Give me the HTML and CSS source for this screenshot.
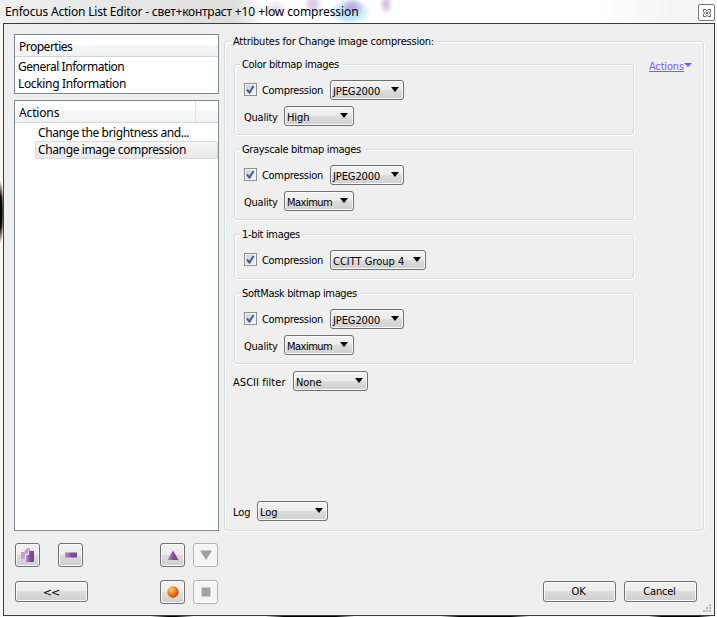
FILE: index.html
```html
<!DOCTYPE html>
<html lang="en">
<head>
<meta charset="utf-8">
<title>Enfocus Action List Editor</title>
<link rel="stylesheet" href="styles.css">
</head>
<body>
<div class="window">
  <header class="titlebar">
    <span class="title"><span class="t-a">Enfocus Action List Editor - </span><span class="t-b">свет+контраст</span><span class="t-c"> +10 +low compression</span></span>
    <button class="close" aria-label="Close"><svg width="8" height="8" viewBox="0 0 8 8"><path d="M.5.5h2l1.500 1 1.500-1h2v2l-1 1.500 1 1.500v2h-2l-1.500-1-1.500 1h-2v-2l1-1.500-1-1.500z" fill="#fff" stroke="#555860"/><path d="M2.500 2.500l3 3m0-3l-3 3" stroke="#777a80"/></svg></button>
  </header>
  <main class="client">
    <aside class="side">
      <section class="tree props">
        <h2 class="tree-head">Properties</h2>
        <div class="row r-gen">General Information</div>
        <div class="row r-lock">Locking Information</div>
      </section>
      <section class="tree actions">
        <h2 class="tree-head split">Actions</h2>
        <div class="row sub r-bright">Change the brightness and...</div>
        <div class="row sub selected r-change">Change image compression</div>
      </section>
      <div class="tools">
        <button class="tool" aria-label="Add"><svg width="15" height="16" viewBox="0 0 15 16"><defs><linearGradient id="p" x2="1"><stop stop-color="#b795c6"/><stop offset=".6" stop-color="#7b4794"/></linearGradient></defs><path d="M1 5h3l3-4h3v3L6 7v5H1z" fill="#c0a2cc"/><path d="M6 8l3-4h5v11H6z" fill="url(#p)"/><path d="M5.500 12V7.500h3V4" stroke="#f2eaf5" fill="none"/></svg></button>
        <button class="tool second" aria-label="Remove"><svg width="12" height="6"><rect width="12" height="5" y=".5" fill="url(#p)"/></svg></button>
        <button class="tool up" aria-label="Move up"><svg width="12" height="10"><path d="M6 .5L11.500 10H.5z" fill="url(#p)"/></svg></button>
        <button class="tool off" aria-label="Move down" disabled><svg width="12" height="10"><path d="M0 .5h12L6 10z" fill="#a0a0a0"/></svg></button>
      </div>
      <div class="tools lower">
        <button class="push"><span class="chev">&lt;&lt;</span></button>
        <button class="tool rec" aria-label="Record"><svg width="12" height="12"><defs><radialGradient id="o" cx=".35" cy=".3" r=".75"><stop stop-color="#ffd26a"/><stop offset=".45" stop-color="#f58a1f"/><stop offset="1" stop-color="#c43c16"/></radialGradient></defs><circle cx="6" cy="6" r="5.700" fill="url(#o)"/></svg></button>
        <button class="tool off" aria-label="Stop" disabled><svg width="10" height="10"><rect width="9" height="9" x=".5" y=".5" fill="#a3a3a3"/></svg></button>
      </div>
    </aside>
    <div class="content">
      <section class="group outer">
        <h2 class="legend l-main">Attributes for Change image compression:</h2>
        <div class="columns">
          <div class="groups">
            <section class="group"><h3 class="legend">Color bitmap images</h3>
              <div class="line"><i class="check"><svg width="9" height="9"><path d="M1 4.500L3.500 7.500 7.500 1" fill="none" stroke="#42589b" stroke-width="2"/></svg></i><span class="w-comp">Compression</span><button class="combo jp"><span>JPEG2000</span></button></div>
              <div class="line"><span class="w-qual">Quality</span><button class="combo q"><span>High</span></button></div>
            </section>
            <section class="group"><h3 class="legend">Grayscale bitmap images</h3>
              <div class="line"><i class="check"><svg width="9" height="9"><path d="M1 4.500L3.500 7.500 7.500 1" fill="none" stroke="#42589b" stroke-width="2"/></svg></i><span class="w-comp">Compression</span><button class="combo jp"><span>JPEG2000</span></button></div>
              <div class="line"><span class="w-qual">Quality</span><button class="combo q max"><span>Maximum</span></button></div>
            </section>
            <section class="group one"><h3 class="legend">1-bit images</h3>
              <div class="line"><i class="check"><svg width="9" height="9"><path d="M1 4.500L3.500 7.500 7.500 1" fill="none" stroke="#42589b" stroke-width="2"/></svg></i><span class="w-comp">Compression</span><button class="combo ccitt"><span>CCITT Group 4</span></button></div>
            </section>
            <section class="group"><h3 class="legend">SoftMask bitmap images</h3>
              <div class="line"><i class="check"><svg width="9" height="9"><path d="M1 4.500L3.500 7.500 7.500 1" fill="none" stroke="#42589b" stroke-width="2"/></svg></i><span class="w-comp">Compression</span><button class="combo jp"><span>JPEG2000</span></button></div>
              <div class="line"><span class="w-qual">Quality</span><button class="combo q max"><span>Maximum</span></button></div>
            </section>
          </div>
          <a class="menu-link"><span>Actions</span></a>
        </div>
        <div class="line ascii"><span class="w-ascii">ASCII filter</span><button class="combo none"><span>None</span></button></div>
        <div class="line log"><span class="w-log">Log</span><button class="combo lg"><span>Log</span></button></div>
      </section>
      <footer class="footer"><button class="push ok">OK</button><button class="push cancel">Cancel</button></footer>
    </div>
    <svg class="grip" width="9" height="9" fill="#b8b8b8"><path d="M6 0h2v2H6zM3 3h2v2H3zM6 3h2v2H6zM0 6h2v2H0zM3 6h2v2H3zM6 6h2v2H6z"/></svg>
  </main>
</div>
</body>
</html>
```
FILE: styles.css
```css
* { box-sizing: border-box; }
body {
  margin: 0;
  width: 717px;
  height: 617px;
  overflow: hidden;
  font: 11px/14px "DejaVu Sans Condensed", "DejaVu Sans", sans-serif;
  font-stretch: condensed;
  color: #000;
  background: #fff;
}
button { font: inherit; color: inherit; padding: 0; margin: 0; }
h2, h3 { margin: 0; font: inherit; }
.window {
  height: 617px;
  padding: 0 3px 1px;
  background:
    radial-gradient(ellipse 4px 32px at 0 212px, #000 50%, transparent) no-repeat,
    radial-gradient(ellipse 45px 3px at 310px 616px, #000 60%, transparent),
    radial-gradient(ellipse 45px 3px at 485px 616px, #000 60%, transparent),
    radial-gradient(ellipse 32px 3px at 680px 616px, #000 60%, transparent),
    radial-gradient(ellipse 22px 2px at 172px 616px, #000 30%, transparent),
    #f8f8f8;
}
.titlebar {
  height: 23px;
  margin: 0 -3px;
  padding: 4px 2px 0 5px;
  display: flex;
  justify-content: space-between;
  background:
    radial-gradient(ellipse 7px 11px at 386px 4px, #d5c3e3 20%, transparent),
    radial-gradient(ellipse 9px 11px at 313px 4px, #dccbe8 30%, transparent),
    radial-gradient(ellipse 12px 9px at 352px 7px, #b9b0e2 20%, transparent),
    radial-gradient(ellipse 21px 13px at 350px 12px, #bce6fa 50%, transparent),
    radial-gradient(ellipse 14px 9px at 275px 9px, #e7d9ed, transparent),
    linear-gradient(90deg, #efefef 0, #e4e4e4 160px, #dedede 235px, #fff 265px, #fff 600px, #f3f3f3 680px, #fafafa);
}
.title {
  font: 12px/16px "Noto Sans", sans-serif;
  white-space: pre;
}
.t-a { letter-spacing: -0.2px; }
.t-b { letter-spacing: -0.25px; }
.t-c { letter-spacing: -0.1px; }
.close {
  width: 17px;
  height: 17px;
  display: grid;
  place-items: center;
  background: #fff;
  border: 1px solid #74777b;
  border-radius: 2px;
}
.client {
  position: relative;
  height: 593px;
  width: 712px;
  border: 1px solid #3c3c3c;
  background: #efefef;
  display: flex;
  padding: 10px 9px 0 10px;
}
.side { width: 205px; font: 12px/17px "Noto Sans", sans-serif; white-space: nowrap; }
.tree { border: 1px solid #828790; background: #fff; }
.props { height: 60px; }
.actions { height: 431px; margin-top: 6px; }
.tree-head {
  height: 22px;
  padding: 3px 4px 0;
  background: linear-gradient(#fff 45%, #f5f6f8 46%, #f1f2f4);
  border-bottom: 1px solid #d5d5d5;
  letter-spacing: -0.5px;
}
.tree-head.split {
  letter-spacing: -0.15px;
  background: linear-gradient(90deg, transparent 180px, #dfe1e4 180px 181px, transparent 181px), linear-gradient(#fff 45%, #f5f6f8 46%, #f1f2f4);
}
.row { height: 17px; line-height: 16px; padding-left: 3px; }
.row:nth-child(2) { margin-top: 2px; }
.r-gen { letter-spacing: -0.47px; }
.r-lock { letter-spacing: -0.35px; }
.r-bright { letter-spacing: -0.41px; }
.r-change { letter-spacing: -0.38px; }
.sub { margin-left: 20px; padding-left: 3px; }
.selected {
  margin-top: -1px;
  height: 18px;
  line-height: 18px;
  border-radius: 3px;
  background: linear-gradient(#f8f8f8, #e6e6e6);
  box-shadow: inset 0 0 0 1px #d9d9d9;
}
.tools { display: flex; margin: 12px 0 0 1px; height: 24px; }
.lower { margin-top: 13px; }
.tool, .push, .combo {
  border: 1px solid #707070;
  border-radius: 3px;
  background: linear-gradient(#f2f2f2, #ebebeb 49%, #dddddd 50%, #cfcfcf);
  box-shadow: inset 0 0 0 1px #fbfbfb;
}
.tool { width: 25px; height: 24px; display: grid; place-items: center; }
.second { margin-left: 18px; }
.up { margin-left: 77px; }
.rec { margin-left: 72px; }
.tool.off { margin-left: 8px; background: #f4f4f4; border-color: #adb2b5; }
.push { width: 73px; height: 21px; padding-top: 1px; font-size: 11px; letter-spacing: -0.2px; }
.ok { padding-right: 2px; }
.cancel { padding-right: 2px; }
.lower .push { margin-top: 1px; padding-right: 1px; font: 11px/17px "DejaVu Sans", sans-serif; letter-spacing: -1px; }
.content { flex: 1; margin-left: 5px; }
.group {
  position: relative;
  height: 71px;
  border: 1px solid #d5dfe5;
  border-radius: 3px;
  box-shadow: 0 1px #fff, 1px 0 #fff, inset 1px 1px #fff;
  padding: 15px 0 0 9px;
}
.outer { width: 480px; height: 490px; margin-top: 7px; padding: 22px 0 0 9px; }
.legend {
  position: absolute;
  top: -7px;
  left: 5px;
  padding: 0 3px 0 2px;
  background: #efefef;
  white-space: nowrap;
  letter-spacing: -0.33px;
}
.legend.l-main { left: 6px; letter-spacing: -0.22px; }
.columns { display: flex; justify-content: space-between; padding-right: 11px; }
.groups { width: 400px; display: flex; flex-direction: column; gap: 14px; }
.one { height: 45px; }
.line { display: flex; align-items: center; height: 20px; white-space: nowrap; }
.line + .line { margin-top: 6px; }
.check {
  width: 13px;
  height: 13px;
  margin: -1px 5px 1px 0;
  display: grid;
  place-items: center;
  background: linear-gradient(135deg, #cbd0d6, #f4f5f6);
  border: 1px solid #8e8f8f;
  box-shadow: inset 0 0 0 1px #f4f4f4;
}
.combo {
  height: 20px;
  padding: 3px 4px 0 3px;
  text-align: left;
  display: flex;
  justify-content: space-between;
  letter-spacing: -0.1px;
}
.combo::after {
  content: "";
  width: 8px;
  height: 5px;
  margin-top: 3px;
  background: #000;
  clip-path: polygon(0 0, 100% 0, 50% 100%);
}
.combo span { line-height: 16px; margin-right: -4px; }
.line > span { width: 68px; padding-top: 2px; }
.line > .w-comp { letter-spacing: -0.3px; }
.line > .w-qual { width: 40px; padding-top: 4px; letter-spacing: -0.25px; }
.jp { width: 74px; padding-left: 2px; }
.q { width: 70px; padding-left: 2px; }
.q::after { margin-right: 1px; }
.max { letter-spacing: -0.5px; }
.ccitt { width: 96px; padding-left: 2px; letter-spacing: 0; }
.line > .w-ascii { width: 60px; padding-top: 3px; letter-spacing: 0.05px; }
.ascii { margin: 7px 0 0 -1px; }
.none { width: 75px; padding-left: 2px; }
.line.log { margin: 110px 0 0 -1px; }
.line > .w-log { width: 24px; padding-top: 3px; }
.lg { width: 71px; padding-left: 2px; }
.menu-link { display: flex; color: #7b5cff; margin-top: -4px; height: 14px; letter-spacing: -0.15px; }
.menu-link span { text-decoration: underline; text-underline-offset: 1px; }
.menu-link::after {
  content: "";
  width: 8px;
  height: 4px;
  margin-top: 3px;
  background: #7b5cff;
  clip-path: polygon(0 0, 100% 0, 50% 100%);
}
.footer { display: flex; gap: 8px; justify-content: flex-end; padding-right: 8px; margin-top: 50px; }
.grip { position: absolute; right: 2px; bottom: 2px; }
```
